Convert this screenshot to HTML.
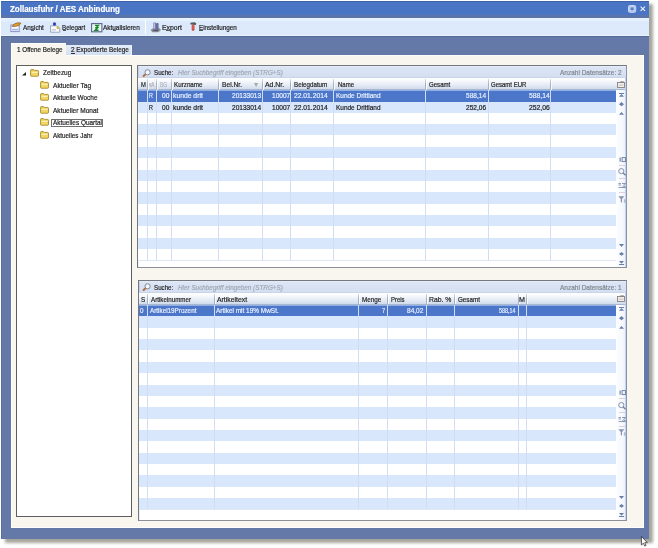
<!DOCTYPE html>
<html><head><meta charset="utf-8"><style>
*{margin:0;padding:0;box-sizing:border-box}
html,body{width:658px;height:548px;overflow:hidden;background:#fff}
body{position:relative;font-family:"Liberation Sans",sans-serif}
.a{position:absolute}
.t{position:absolute;white-space:nowrap;line-height:1;transform-origin:0 0;-webkit-text-stroke:0.2px currentColor}
svg{position:absolute;overflow:visible}
</style></head><body>
<div id="wrap" style="position:absolute;left:0;top:0;width:658px;height:548px;filter:blur(0.35px)">
<div class="a" style="left:5px;top:4px;width:648.3px;height:538.6px;background:rgba(95,92,75,.55);filter:blur(1.5px)"></div>
<div class="a" style="left:1px;top:1px;width:648.30px;height:538.10px;background:#6479a8;border-left:1px solid #5a6e9c"></div>
<div class="a" style="left:1px;top:1px;width:648.30px;height:1.00px;background:#3f63a8"></div>
<div class="a" style="left:1px;top:2px;width:648.30px;height:13.40px;background:#4a74c4"></div>
<div class="a" style="left:1px;top:15.4px;width:648.30px;height:2.20px;background:#5b74aa"></div>
<div class="a" style="left:1px;top:17.6px;width:648.30px;height:17.40px;background:linear-gradient(#e8f5fe 0,#e3f0fd 2.5px,#dce9fb 4px,#ddeafb 100%)"></div>
<div class="a" style="left:1px;top:35.0px;width:648.30px;height:1.00px;background:#eaf4fe"></div>
<div class="a" style="left:1px;top:36.0px;width:648.30px;height:1.00px;background:#586c9b"></div>
<div class="t" style="left:10.00px;top:5.00px;font-size:8.6px;font-weight:bold;color:#ffffff;transform:scaleX(0.926);">Zollausfuhr / AES Anbindung</div>
<svg style="left:627.8px;top:4.9px" width="8.2" height="7.8" viewBox="0 0 8.2 7.8"><rect x="0.5" y="0.5" width="7.2" height="6.8" rx="1.3" fill="#9fb8e6" stroke="#c9d8f4" stroke-width="1"/><rect x="2.0" y="1.9" width="4.2" height="4.0" fill="#5d82c9" stroke="#e3ecfb" stroke-width="0.8"/></svg>
<svg style="left:639.8px;top:6px" width="5.6" height="5.4" viewBox="0 0 5.6 5.4"><path d="M0.6 0.6 L5 4.8 M5 0.6 L0.6 4.8" stroke="#f4f8ff" stroke-width="1.05"/></svg>
<div class="t" style="left:22.80px;top:24.00px;font-size:7.7px;color:#1a1a1a;transform:scaleX(0.828);">Ansicht</div>
<div class="t" style="left:62.30px;top:24.00px;font-size:7.7px;color:#1a1a1a;transform:scaleX(0.809);">Belegart</div>
<div class="t" style="left:103.30px;top:24.00px;font-size:7.7px;color:#1a1a1a;transform:scaleX(0.835);">Aktualisieren</div>
<div class="t" style="left:162.10px;top:24.00px;font-size:7.7px;color:#1a1a1a;transform:scaleX(0.894);">Export</div>
<div class="t" style="left:199.20px;top:24.00px;font-size:7.7px;color:#1a1a1a;transform:scaleX(0.818);">Einstellungen</div>
<div class="a" style="left:30.6px;top:30.3px;width:3.00px;height:0.60px;background:#555"></div>
<div class="a" style="left:62.5px;top:30.3px;width:3.30px;height:0.60px;background:#555"></div>
<div class="a" style="left:112.6px;top:30.3px;width:3.80px;height:0.60px;background:#555"></div>
<div class="a" style="left:166.3px;top:30.3px;width:3.50px;height:0.60px;background:#555"></div>
<div class="a" style="left:199.4px;top:30.3px;width:3.20px;height:0.60px;background:#555"></div>
<div class="a" style="left:145px;top:19.5px;width:1.00px;height:14.10px;background:#97a3b8;border-right:1px solid #fff"></div>
<svg style="left:9.6px;top:22.2px" width="12" height="10.2" viewBox="0 0 12 10.2"><rect x="0.9" y="3" width="8.3" height="6.6" fill="#fbfcff" stroke="#8c8fc6" stroke-width="1"/><rect x="2.2" y="6.8" width="5.8" height="1.6" fill="#9fb4e0"/><path d="M2.2 4.4 C4 1.4 7.6 0.2 10.9 1.2 C9.6 3.6 6.2 4.8 2.2 4.4 Z" fill="#e8a21e" stroke="#7a5420" stroke-width="0.7"/></svg>
<svg style="left:49.7px;top:21.5px" width="10.6" height="10.8" viewBox="0 0 10.6 10.8"><path d="M0.6 3.8 H6.8 L9.8 6.4 V10.2 H0.6 Z" fill="#fdfdff" stroke="#8e9ab2" stroke-width="0.9"/><rect x="2" y="7.2" width="4" height="1.3" fill="#b9c4d8"/><ellipse cx="4.5" cy="2.0" rx="1.6" ry="1.8" fill="#2f3fb8"/><circle cx="7.8" cy="5.8" r="1.3" fill="#c8c030"/></svg>
<svg style="left:90.8px;top:22.8px" width="11.5" height="9.4" viewBox="0 0 11.5 9.4"><rect x="0.6" y="0.6" width="10.3" height="8.2" fill="#eef6f4" stroke="#59658a" stroke-width="1.1"/><path d="M3.9 2.4 H7.4 L5.2 4.5 M4.2 4.8 L6.6 4.8 L4.1 7.2 H7.6" fill="none" stroke="#168a28" stroke-width="1.4"/></svg>
<svg style="left:149.8px;top:21.5px" width="11.5" height="11" viewBox="0 0 11.5 11"><path d="M0.6 7.8 L3 6.2 H9.6 L11 8 L8.4 10.3 H2.2 Z" fill="#8b8f99"/><path d="M2.6 8.8 L4 7.6 H8.6 L7.6 9.2 Z" fill="#4f535e"/><rect x="3.4" y="0.5" width="2.6" height="7" rx="0.8" fill="#7b7fb4"/><rect x="6" y="1" width="2.6" height="6.5" rx="0.8" fill="#696d9c"/><rect x="4" y="1.2" width="0.9" height="5.4" fill="#c4c6e6"/></svg>
<svg style="left:189.6px;top:22.4px" width="6.6" height="9" viewBox="0 0 6.6 9"><path d="M0.3 0.8 L4.6 0.2 L6.3 1.6 L5.8 3 L0.6 2.6 Z" fill="#4e5a58"/><rect x="1.7" y="2.4" width="2.8" height="6.4" rx="1.3" fill="#c8402e"/><rect x="2.6" y="3" width="0.9" height="4.4" fill="#e08070"/></svg>
<div class="a" style="left:10.5px;top:55px;width:633.50px;height:473.00px;background:#f8f6ef;border-left:1.5px solid #fff;border-right:1.5px solid #fff;border-bottom:1.5px solid #fff;border-top:1px solid #fdfdfb"></div>
<div class="a" style="left:10.5px;top:43px;width:55.30px;height:13.20px;background:#f8f6ef;border-left:1px solid #fff;border-top:1px solid #fff"></div>
<div class="a" style="left:65.8px;top:44.6px;width:66.60px;height:10.40px;background:linear-gradient(#e3ecf9,#d3dff2);border-right:1.2px solid #eef3fb"></div>
<div class="t" style="left:16.60px;top:46.00px;font-size:7.7px;color:#1a1a1a;transform:scaleX(0.820);">1 Offene Belege</div>
<div class="t" style="left:71.00px;top:46.00px;font-size:7.7px;color:#1a1a1a;transform:scaleX(0.831);">2 Exportierte Belege</div>
<div class="a" style="left:71.2px;top:53.2px;width:3.40px;height:0.60px;background:#333"></div>
<div class="a" style="left:16px;top:65px;width:116.00px;height:452.00px;background:#fff;border:1px solid #5e5e5e"></div>
<svg style="left:22.2px;top:72px" width="4" height="3.4" viewBox="0 0 4 3.4"><polygon points="4,0 4,3.4 0,3.4" fill="#222"/></svg>
<svg style="left:29.6px;top:68.7px" width="9.2" height="7.8" viewBox="0 0 9.2 7.8"><path d="M0.6 1.3 Q0.6 0.5 1.4 0.5 H3.4 L4.4 1.4 H7.6 Q8.5 1.4 8.5 2.3 V6.6 Q8.5 7.2 7.9 7.2 H1.2 Q0.6 7.2 0.6 6.6 Z" fill="#eccb4a" stroke="#a38a34" stroke-width="0.9"/><path d="M1.4 2.6 H7.7 V4.0 H1.4 Z" fill="#fbf0b4"/><path d="M1.4 4.2 H7.7 V6.4 H1.4 Z" fill="#f2d768"/></svg>
<svg style="left:40.1px;top:80.9px" width="9.2" height="7.8" viewBox="0 0 9.2 7.8"><path d="M0.6 1.3 Q0.6 0.5 1.4 0.5 H3.4 L4.4 1.4 H7.6 Q8.5 1.4 8.5 2.3 V6.6 Q8.5 7.2 7.9 7.2 H1.2 Q0.6 7.2 0.6 6.6 Z" fill="#eccb4a" stroke="#a38a34" stroke-width="0.9"/><path d="M1.4 2.6 H7.7 V4.0 H1.4 Z" fill="#fbf0b4"/><path d="M1.4 4.2 H7.7 V6.4 H1.4 Z" fill="#f2d768"/></svg>
<svg style="left:40.1px;top:93.4px" width="9.2" height="7.8" viewBox="0 0 9.2 7.8"><path d="M0.6 1.3 Q0.6 0.5 1.4 0.5 H3.4 L4.4 1.4 H7.6 Q8.5 1.4 8.5 2.3 V6.6 Q8.5 7.2 7.9 7.2 H1.2 Q0.6 7.2 0.6 6.6 Z" fill="#eccb4a" stroke="#a38a34" stroke-width="0.9"/><path d="M1.4 2.6 H7.7 V4.0 H1.4 Z" fill="#fbf0b4"/><path d="M1.4 4.2 H7.7 V6.4 H1.4 Z" fill="#f2d768"/></svg>
<svg style="left:40.1px;top:105.9px" width="9.2" height="7.8" viewBox="0 0 9.2 7.8"><path d="M0.6 1.3 Q0.6 0.5 1.4 0.5 H3.4 L4.4 1.4 H7.6 Q8.5 1.4 8.5 2.3 V6.6 Q8.5 7.2 7.9 7.2 H1.2 Q0.6 7.2 0.6 6.6 Z" fill="#eccb4a" stroke="#a38a34" stroke-width="0.9"/><path d="M1.4 2.6 H7.7 V4.0 H1.4 Z" fill="#fbf0b4"/><path d="M1.4 4.2 H7.7 V6.4 H1.4 Z" fill="#f2d768"/></svg>
<svg style="left:40.1px;top:118.4px" width="9.2" height="7.8" viewBox="0 0 9.2 7.8"><path d="M0.6 1.3 Q0.6 0.5 1.4 0.5 H3.4 L4.4 1.4 H7.6 Q8.5 1.4 8.5 2.3 V6.6 Q8.5 7.2 7.9 7.2 H1.2 Q0.6 7.2 0.6 6.6 Z" fill="#eccb4a" stroke="#a38a34" stroke-width="0.9"/><path d="M1.4 2.6 H7.7 V4.0 H1.4 Z" fill="#fbf0b4"/><path d="M1.4 4.2 H7.7 V6.4 H1.4 Z" fill="#f2d768"/></svg>
<svg style="left:40.1px;top:130.9px" width="9.2" height="7.8" viewBox="0 0 9.2 7.8"><path d="M0.6 1.3 Q0.6 0.5 1.4 0.5 H3.4 L4.4 1.4 H7.6 Q8.5 1.4 8.5 2.3 V6.6 Q8.5 7.2 7.9 7.2 H1.2 Q0.6 7.2 0.6 6.6 Z" fill="#eccb4a" stroke="#a38a34" stroke-width="0.9"/><path d="M1.4 2.6 H7.7 V4.0 H1.4 Z" fill="#fbf0b4"/><path d="M1.4 4.2 H7.7 V6.4 H1.4 Z" fill="#f2d768"/></svg>
<div class="a" style="left:51.1px;top:119.0px;width:52.20px;height:8.30px;border:1px solid #707070"></div>
<div class="t" style="left:42.60px;top:69.00px;font-size:7.6px;color:#1a1a1a;transform:scaleX(0.848);">Zeitbezug</div>
<div class="t" style="left:52.70px;top:82.00px;font-size:7.6px;color:#1a1a1a;transform:scaleX(0.870);">Aktueller Tag</div>
<div class="t" style="left:52.70px;top:94.00px;font-size:7.6px;color:#1a1a1a;transform:scaleX(0.845);">Aktuelle Woche</div>
<div class="t" style="left:52.70px;top:107.00px;font-size:7.6px;color:#1a1a1a;transform:scaleX(0.861);">Aktueller Monat</div>
<div class="t" style="left:52.70px;top:119.00px;font-size:7.6px;color:#1a1a1a;transform:scaleX(0.847);">Aktuelles Quartal</div>
<div class="t" style="left:52.70px;top:132.00px;font-size:7.6px;color:#1a1a1a;transform:scaleX(0.828);">Aktuelles Jahr</div>
<div class="a" style="left:137.3px;top:65.2px;width:489.60px;height:202.80px;background:#fff;border:1px solid #73777e;border-right-color:#8795b0;border-bottom-color:#8a8f99"></div>
<div class="a" style="left:138.3px;top:66.2px;width:487.60px;height:11.20px;background:linear-gradient(#dce5f5,#d4dff2);border-left:1px solid #c3d1e8;border-top:1px solid #e6ecf7"></div>
<div class="a" style="left:138.3px;top:76.9px;width:487.60px;height:1.00px;background:#c9d4e8"></div>
<svg style="left:140.9px;top:68.5px" width="10" height="9" viewBox="0 0 10 9"><line x1="4.3" y1="5.5" x2="2.6" y2="7.0" stroke="#b8713a" stroke-width="2.1" stroke-linecap="round"/><circle cx="6.6" cy="3.3" r="2.6" fill="#f4f8fc" stroke="#7f8898" stroke-width="1"/></svg>
<div class="t" style="left:154.20px;top:69.00px;font-size:7.7px;color:#1e1e1e;transform:scaleX(0.805);">Suche:</div>
<div class="t" style="left:178.00px;top:69.00px;font-size:7.7px;font-style:italic;color:#a0a7b2;transform:scaleX(0.825);">Hier Suchbegriff eingeben (STRG+S)</div>
<div class="t" style="left:559.90px;top:69.00px;font-size:7.7px;color:#80868f;transform:scaleX(0.844);">Anzahl Datensätze: 2</div>
<div class="a" style="left:138.3px;top:77.9px;width:487.60px;height:12.30px;background:linear-gradient(#ffffff 0%,#f5f8fc 30%,#e2e9f4 70%,#d0dbed 100%);border-bottom:1px solid #a9b8d0"></div>
<div class="a" style="left:616.0px;top:90.2px;width:9.90px;height:176.80px;background:linear-gradient(90deg,#fdfeff,#f4f7fc 70%,#e9eff8)"></div>
<div class="a" style="left:624.8px;top:77.9px;width:1.10px;height:189.10px;background:#c6d3ea"></div>
<div class="a" style="left:138.3px;top:90.2px;width:1.00px;height:176.80px;background:rgba(232,238,248,.9)"></div>
<div class="a" style="left:138.3px;top:90.2px;width:477.70px;height:170.40px;background:repeating-linear-gradient(#fff 0,#fff 11.36px,#d9e7fc 11.36px,#d9e7fc 22.72px)"></div>
<div class="a" style="left:138.3px;top:260.4px;width:477.70px;height:1.00px;background:#dfe7f4"></div>
<div class="a" style="left:138.3px;top:90.2px;width:477.70px;height:11.36px;background:#4b76c9"></div>
<div class="a" style="left:138.3px;top:90.2px;width:477.70px;height:0.90px;background:#8fb0e6"></div>
<div class="a" style="left:146.7px;top:90.2px;width:1.00px;height:170.40px;background:#d0ddf2"></div>
<div class="a" style="left:146.7px;top:79.10000000000001px;width:1.00px;height:10.50px;background:linear-gradient(#d4d9e2,#a2adbf 50%,#a8b3c5)"></div>
<div class="a" style="left:147.7px;top:79.10000000000001px;width:0.60px;height:10.50px;background:rgba(255,255,255,.8)"></div>
<div class="a" style="left:156.4px;top:90.2px;width:1.00px;height:170.40px;background:#d0ddf2"></div>
<div class="a" style="left:156.4px;top:79.10000000000001px;width:1.00px;height:10.50px;background:linear-gradient(#d4d9e2,#a2adbf 50%,#a8b3c5)"></div>
<div class="a" style="left:157.4px;top:79.10000000000001px;width:0.60px;height:10.50px;background:rgba(255,255,255,.8)"></div>
<div class="a" style="left:170.5px;top:90.2px;width:1.00px;height:170.40px;background:#d0ddf2"></div>
<div class="a" style="left:170.5px;top:79.10000000000001px;width:1.00px;height:10.50px;background:linear-gradient(#d4d9e2,#a2adbf 50%,#a8b3c5)"></div>
<div class="a" style="left:171.5px;top:79.10000000000001px;width:0.60px;height:10.50px;background:rgba(255,255,255,.8)"></div>
<div class="a" style="left:218.4px;top:90.2px;width:1.00px;height:170.40px;background:#d0ddf2"></div>
<div class="a" style="left:218.4px;top:79.10000000000001px;width:1.00px;height:10.50px;background:linear-gradient(#d4d9e2,#a2adbf 50%,#a8b3c5)"></div>
<div class="a" style="left:219.4px;top:79.10000000000001px;width:0.60px;height:10.50px;background:rgba(255,255,255,.8)"></div>
<div class="a" style="left:262.3px;top:90.2px;width:1.00px;height:170.40px;background:#d0ddf2"></div>
<div class="a" style="left:262.3px;top:79.10000000000001px;width:1.00px;height:10.50px;background:linear-gradient(#d4d9e2,#a2adbf 50%,#a8b3c5)"></div>
<div class="a" style="left:263.3px;top:79.10000000000001px;width:0.60px;height:10.50px;background:rgba(255,255,255,.8)"></div>
<div class="a" style="left:290.4px;top:90.2px;width:1.00px;height:170.40px;background:#d0ddf2"></div>
<div class="a" style="left:290.4px;top:79.10000000000001px;width:1.00px;height:10.50px;background:linear-gradient(#d4d9e2,#a2adbf 50%,#a8b3c5)"></div>
<div class="a" style="left:291.4px;top:79.10000000000001px;width:0.60px;height:10.50px;background:rgba(255,255,255,.8)"></div>
<div class="a" style="left:333.3px;top:90.2px;width:1.00px;height:170.40px;background:#d0ddf2"></div>
<div class="a" style="left:333.3px;top:79.10000000000001px;width:1.00px;height:10.50px;background:linear-gradient(#d4d9e2,#a2adbf 50%,#a8b3c5)"></div>
<div class="a" style="left:334.3px;top:79.10000000000001px;width:0.60px;height:10.50px;background:rgba(255,255,255,.8)"></div>
<div class="a" style="left:425.3px;top:90.2px;width:1.00px;height:170.40px;background:#d0ddf2"></div>
<div class="a" style="left:425.3px;top:79.10000000000001px;width:1.00px;height:10.50px;background:linear-gradient(#d4d9e2,#a2adbf 50%,#a8b3c5)"></div>
<div class="a" style="left:426.3px;top:79.10000000000001px;width:0.60px;height:10.50px;background:rgba(255,255,255,.8)"></div>
<div class="a" style="left:488.2px;top:90.2px;width:1.00px;height:170.40px;background:#d0ddf2"></div>
<div class="a" style="left:488.2px;top:79.10000000000001px;width:1.00px;height:10.50px;background:linear-gradient(#d4d9e2,#a2adbf 50%,#a8b3c5)"></div>
<div class="a" style="left:489.2px;top:79.10000000000001px;width:0.60px;height:10.50px;background:rgba(255,255,255,.8)"></div>
<div class="a" style="left:550.2px;top:90.2px;width:1.00px;height:170.40px;background:#d0ddf2"></div>
<div class="a" style="left:550.2px;top:79.10000000000001px;width:1.00px;height:10.50px;background:linear-gradient(#d4d9e2,#a2adbf 50%,#a8b3c5)"></div>
<div class="a" style="left:551.2px;top:79.10000000000001px;width:0.60px;height:10.50px;background:rgba(255,255,255,.8)"></div>
<svg style="left:617.3px;top:80.5px" width="8" height="7" viewBox="0 0 8 7"><rect x="0.5" y="1.5" width="7" height="5" fill="#f2f0ee" stroke="#8a817c" stroke-width="0.9"/><rect x="3.2" y="0.4" width="3.6" height="1.6" fill="#8a817c"/><rect x="1.6" y="3.3" width="4.8" height="1.8" fill="#d8d2cc"/></svg>
<div class="t" style="left:140.80px;top:81.00px;font-size:7.7px;color:#222;transform:scaleX(0.762);">M</div>
<div class="t" style="left:148.80px;top:81.00px;font-size:7.7px;color:#b0a8b0;transform:scaleX(0.599);">vA</div>
<div class="t" style="left:159.80px;top:81.00px;font-size:7.7px;color:#b0b6c0;transform:scaleX(0.647);">BG</div>
<div class="t" style="left:173.70px;top:81.00px;font-size:7.7px;color:#222;transform:scaleX(0.815);">Kurzname</div>
<div class="t" style="left:222.40px;top:81.00px;font-size:7.7px;color:#222;transform:scaleX(0.866);">Bel.Nr.</div>
<div class="t" style="left:265.20px;top:81.00px;font-size:7.7px;color:#222;transform:scaleX(0.897);">Ad.Nr.</div>
<div class="t" style="left:294.00px;top:81.00px;font-size:7.7px;color:#222;transform:scaleX(0.811);">Belegdatum</div>
<div class="t" style="left:337.70px;top:81.00px;font-size:7.7px;color:#222;transform:scaleX(0.778);">Name</div>
<div class="t" style="left:429.00px;top:81.00px;font-size:7.7px;color:#222;transform:scaleX(0.790);">Gesamt</div>
<div class="t" style="left:490.90px;top:81.00px;font-size:7.7px;color:#222;transform:scaleX(0.781);">Gesamt EUR</div>
<div class="t" style="left:149.10px;top:92.00px;font-size:7.7px;color:#eaf1ff;transform:scaleX(0.703);">R</div>
<div class="t" style="left:161.50px;top:92.00px;font-size:7.7px;color:#eaf1ff;transform:scaleX(0.854);">00</div>
<div class="t" style="left:172.50px;top:92.00px;font-size:7.7px;color:#eaf1ff;transform:scaleX(0.882);">kunde drit</div>
<div class="t" style="left:231.50px;top:92.00px;font-size:7.7px;color:#eaf1ff;transform:scaleX(0.852);">20133013</div>
<div class="t" style="left:271.60px;top:92.00px;font-size:7.7px;color:#eaf1ff;transform:scaleX(0.855);">10007</div>
<div class="t" style="left:293.50px;top:92.00px;font-size:7.7px;color:#eaf1ff;transform:scaleX(0.877);">22.01.2014</div>
<div class="t" style="left:336.40px;top:92.00px;font-size:7.7px;color:#eaf1ff;transform:scaleX(0.840);">Kunde Drittland</div>
<div class="t" style="left:466.30px;top:92.00px;font-size:7.7px;color:#eaf1ff;transform:scaleX(0.853);">588,14</div>
<div class="t" style="left:528.50px;top:92.00px;font-size:7.7px;color:#eaf1ff;transform:scaleX(0.883);">588,14</div>
<div class="t" style="left:149.10px;top:104.00px;font-size:7.7px;color:#1a1a1a;transform:scaleX(0.703);">R</div>
<div class="t" style="left:161.50px;top:104.00px;font-size:7.7px;color:#1a1a1a;transform:scaleX(0.854);">00</div>
<div class="t" style="left:172.50px;top:104.00px;font-size:7.7px;color:#1a1a1a;transform:scaleX(0.882);">kunde drit</div>
<div class="t" style="left:231.50px;top:104.00px;font-size:7.7px;color:#1a1a1a;transform:scaleX(0.852);">20133014</div>
<div class="t" style="left:271.60px;top:104.00px;font-size:7.7px;color:#1a1a1a;transform:scaleX(0.855);">10007</div>
<div class="t" style="left:293.50px;top:104.00px;font-size:7.7px;color:#1a1a1a;transform:scaleX(0.877);">22.01.2014</div>
<div class="t" style="left:336.40px;top:104.00px;font-size:7.7px;color:#1a1a1a;transform:scaleX(0.840);">Kunde Drittland</div>
<div class="t" style="left:466.30px;top:104.00px;font-size:7.7px;color:#1a1a1a;transform:scaleX(0.853);">252,06</div>
<div class="t" style="left:528.50px;top:104.00px;font-size:7.7px;color:#1a1a1a;transform:scaleX(0.883);">252,06</div>
<div class="a" style="left:619.3px;top:92.5px;width:5.00px;height:0.90px;background:#6a7ea8"></div>
<svg style="left:619.3px;top:94.2px" width="5" height="2.7" viewBox="0 0 5 2.7"><polygon points="0,2.7 2.5,0 5,2.7" fill="#6a7ea8"/></svg>
<svg style="left:619.3px;top:101.89999999999999px" width="5" height="4.3" viewBox="0 0 5 4.3"><polygon points="0,2.15 2.5,0 5,2.15 2.5,4.3" fill="#6a7ea8"/></svg>
<svg style="left:619.3px;top:111.9px" width="5" height="2.8" viewBox="0 0 5 2.8"><polygon points="0,2.8 2.5,0 5,2.8" fill="#6a7ea8"/></svg>
<svg style="left:618.8px;top:156.9px" width="7" height="5.2" viewBox="0 0 7 5.2"><rect x="0.6" y="0.5" width="1" height="4.2" fill="#5c6d94"/><rect x="3.1" y="0.6" width="3.3" height="4.0" fill="none" stroke="#6a7aa0" stroke-width="0.9"/></svg>
<div class="a" style="left:618.8px;top:164.9px;width:6.50px;height:0.60px;background:#ddd0dc"></div>
<svg style="left:618.0px;top:168.1px" width="9" height="8" viewBox="0 0 9 8"><circle cx="3.3" cy="3.1" r="2.6" fill="#f4f7fb" stroke="#7a86a0" stroke-width="0.9"/><line x1="5.2" y1="5" x2="7.6" y2="7.3" stroke="#6f7fa5" stroke-width="1.3"/></svg>
<div class="a" style="left:618.8px;top:178.4px;width:6.50px;height:0.60px;background:#ddd0dc"></div>
<svg style="left:618.3px;top:183.4px" width="8" height="5" viewBox="0 0 8 5"><path d="M0.5 0.5 H3 M0.5 2 H3 M4 0.5 H7.5 L5.5 2.2 L7.5 4 H4 M0.5 4.5 H7.5" fill="none" stroke="#7584a6" stroke-width="0.8"/></svg>
<div class="a" style="left:618.8px;top:192.10000000000002px;width:6.50px;height:0.60px;background:#ddd0dc"></div>
<svg style="left:618.0px;top:195.7px" width="9" height="7" viewBox="0 0 9 7"><path d="M0.3 0.3 H6.3 L4 3 V6.8 L2.8 6 V3 Z" fill="#8593b3"/><path d="M6.4 3.2 V6.8 M7.8 3.6 V6.8" stroke="#9fb0cc" stroke-width="0.9"/></svg>
<svg style="left:619.3px;top:243.7px" width="5" height="3" viewBox="0 0 5 3"><polygon points="0,0 2.5,3 5,0" fill="#6a7ea8"/></svg>
<svg style="left:619.3px;top:252.29999999999998px" width="5" height="3.8" viewBox="0 0 5 3.8"><polygon points="0,1.9 2.5,0 5,1.9 2.5,3.8" fill="#6a7ea8"/></svg>
<svg style="left:619.3px;top:260.9px" width="5" height="2.8" viewBox="0 0 5 2.8"><polygon points="0,0 2.5,2.8 5,0" fill="#6a7ea8"/></svg>
<div class="a" style="left:619.3px;top:264.3px;width:5.00px;height:0.90px;background:#6a7ea8"></div>
<svg style="position:absolute;left:254.1px;top:82.9px" width="4.2" height="4" viewBox="0 0 4.2 4"><polygon points="0,0 4.2,0 2.1,4" fill="#9fae9f"/></svg>
<div class="a" style="left:137.5px;top:280.0px;width:489.30px;height:240.60px;background:#fff;border:1px solid #73777e;border-right-color:#8795b0;border-bottom-color:#8a8f99"></div>
<div class="a" style="left:138.5px;top:281.0px;width:487.30px;height:11.20px;background:linear-gradient(#dce5f5,#d4dff2);border-left:1px solid #c3d1e8;border-top:1px solid #e6ecf7"></div>
<div class="a" style="left:138.5px;top:291.7px;width:487.30px;height:1.00px;background:#c9d4e8"></div>
<svg style="left:141.1px;top:283.3px" width="10" height="9" viewBox="0 0 10 9"><line x1="4.3" y1="5.5" x2="2.6" y2="7.0" stroke="#b8713a" stroke-width="2.1" stroke-linecap="round"/><circle cx="6.6" cy="3.3" r="2.6" fill="#f4f8fc" stroke="#7f8898" stroke-width="1"/></svg>
<div class="t" style="left:154.20px;top:284.00px;font-size:7.7px;color:#1e1e1e;transform:scaleX(0.805);">Suche:</div>
<div class="t" style="left:178.00px;top:284.00px;font-size:7.7px;font-style:italic;color:#a0a7b2;transform:scaleX(0.825);">Hier Suchbegriff eingeben (STRG+S)</div>
<div class="t" style="left:559.90px;top:284.00px;font-size:7.7px;color:#80868f;transform:scaleX(0.844);">Anzahl Datensätze: 1</div>
<div class="a" style="left:138.5px;top:292.7px;width:487.30px;height:12.30px;background:linear-gradient(#ffffff 0%,#f5f8fc 30%,#e2e9f4 70%,#d0dbed 100%);border-bottom:1px solid #a9b8d0"></div>
<div class="a" style="left:616.0px;top:305.0px;width:9.80px;height:214.60px;background:linear-gradient(90deg,#fdfeff,#f4f7fc 70%,#e9eff8)"></div>
<div class="a" style="left:624.6999999999999px;top:292.7px;width:1.10px;height:226.90px;background:#c6d3ea"></div>
<div class="a" style="left:138.5px;top:305.0px;width:1.00px;height:214.60px;background:rgba(232,238,248,.9)"></div>
<div class="a" style="left:138.5px;top:305.0px;width:477.50px;height:204.48px;background:repeating-linear-gradient(#fff 0,#fff 11.36px,#d9e7fc 11.36px,#d9e7fc 22.72px)"></div>
<div class="a" style="left:138.5px;top:509.28000000000003px;width:477.50px;height:1.00px;background:#dfe7f4"></div>
<div class="a" style="left:138.5px;top:305.0px;width:477.50px;height:11.36px;background:#4b76c9"></div>
<div class="a" style="left:138.5px;top:305.0px;width:477.50px;height:0.90px;background:#8fb0e6"></div>
<div class="a" style="left:146.8px;top:305.0px;width:1.00px;height:204.48px;background:#d0ddf2"></div>
<div class="a" style="left:146.8px;top:293.9px;width:1.00px;height:10.50px;background:linear-gradient(#d4d9e2,#a2adbf 50%,#a8b3c5)"></div>
<div class="a" style="left:147.8px;top:293.9px;width:0.60px;height:10.50px;background:rgba(255,255,255,.8)"></div>
<div class="a" style="left:214.1px;top:305.0px;width:1.00px;height:204.48px;background:#d0ddf2"></div>
<div class="a" style="left:214.1px;top:293.9px;width:1.00px;height:10.50px;background:linear-gradient(#d4d9e2,#a2adbf 50%,#a8b3c5)"></div>
<div class="a" style="left:215.1px;top:293.9px;width:0.60px;height:10.50px;background:rgba(255,255,255,.8)"></div>
<div class="a" style="left:358.3px;top:305.0px;width:1.00px;height:204.48px;background:#d0ddf2"></div>
<div class="a" style="left:358.3px;top:293.9px;width:1.00px;height:10.50px;background:linear-gradient(#d4d9e2,#a2adbf 50%,#a8b3c5)"></div>
<div class="a" style="left:359.3px;top:293.9px;width:0.60px;height:10.50px;background:rgba(255,255,255,.8)"></div>
<div class="a" style="left:387.1px;top:305.0px;width:1.00px;height:204.48px;background:#d0ddf2"></div>
<div class="a" style="left:387.1px;top:293.9px;width:1.00px;height:10.50px;background:linear-gradient(#d4d9e2,#a2adbf 50%,#a8b3c5)"></div>
<div class="a" style="left:388.1px;top:293.9px;width:0.60px;height:10.50px;background:rgba(255,255,255,.8)"></div>
<div class="a" style="left:425.5px;top:305.0px;width:1.00px;height:204.48px;background:#d0ddf2"></div>
<div class="a" style="left:425.5px;top:293.9px;width:1.00px;height:10.50px;background:linear-gradient(#d4d9e2,#a2adbf 50%,#a8b3c5)"></div>
<div class="a" style="left:426.5px;top:293.9px;width:0.60px;height:10.50px;background:rgba(255,255,255,.8)"></div>
<div class="a" style="left:453.7px;top:305.0px;width:1.00px;height:204.48px;background:#d0ddf2"></div>
<div class="a" style="left:453.7px;top:293.9px;width:1.00px;height:10.50px;background:linear-gradient(#d4d9e2,#a2adbf 50%,#a8b3c5)"></div>
<div class="a" style="left:454.7px;top:293.9px;width:0.60px;height:10.50px;background:rgba(255,255,255,.8)"></div>
<div class="a" style="left:517.7px;top:305.0px;width:1.00px;height:204.48px;background:#d0ddf2"></div>
<div class="a" style="left:517.7px;top:293.9px;width:1.00px;height:10.50px;background:linear-gradient(#d4d9e2,#a2adbf 50%,#a8b3c5)"></div>
<div class="a" style="left:518.7px;top:293.9px;width:0.60px;height:10.50px;background:rgba(255,255,255,.8)"></div>
<div class="a" style="left:526.3px;top:305.0px;width:1.00px;height:204.48px;background:#d0ddf2"></div>
<div class="a" style="left:526.3px;top:293.9px;width:1.00px;height:10.50px;background:linear-gradient(#d4d9e2,#a2adbf 50%,#a8b3c5)"></div>
<div class="a" style="left:527.3px;top:293.9px;width:0.60px;height:10.50px;background:rgba(255,255,255,.8)"></div>
<svg style="left:617.3px;top:295.3px" width="8" height="7" viewBox="0 0 8 7"><rect x="0.5" y="1.5" width="7" height="5" fill="#f2f0ee" stroke="#8a817c" stroke-width="0.9"/><rect x="3.2" y="0.4" width="3.6" height="1.6" fill="#8a817c"/><rect x="1.6" y="3.3" width="4.8" height="1.8" fill="#d8d2cc"/></svg>
<div class="t" style="left:140.60px;top:296.00px;font-size:7.7px;color:#222;transform:scaleX(0.820);">S</div>
<div class="t" style="left:150.60px;top:296.00px;font-size:7.7px;color:#222;transform:scaleX(0.808);">Artikelnummer</div>
<div class="t" style="left:217.20px;top:296.00px;font-size:7.7px;color:#222;transform:scaleX(0.890);">Artikeltext</div>
<div class="t" style="left:361.80px;top:296.00px;font-size:7.7px;color:#222;transform:scaleX(0.815);">Menge</div>
<div class="t" style="left:390.60px;top:296.00px;font-size:7.7px;color:#222;transform:scaleX(0.775);">Preis</div>
<div class="t" style="left:428.90px;top:296.00px;font-size:7.7px;color:#222;transform:scaleX(0.887);">Rab. %</div>
<div class="t" style="left:457.60px;top:296.00px;font-size:7.7px;color:#222;transform:scaleX(0.813);">Gesamt</div>
<div class="t" style="left:519.10px;top:296.00px;font-size:7.7px;color:#222;transform:scaleX(0.933);">M</div>
<div class="t" style="left:139.80px;top:307.00px;font-size:7.7px;color:#eaf1ff;transform:scaleX(0.819);">0</div>
<div class="t" style="left:149.70px;top:307.00px;font-size:7.7px;color:#eaf1ff;transform:scaleX(0.823);">Artikel19Prozent</div>
<div class="t" style="left:216.40px;top:307.00px;font-size:7.7px;color:#eaf1ff;transform:scaleX(0.839);">Artikel mit 19% MwSt.</div>
<div class="t" style="left:382.40px;top:307.00px;font-size:7.7px;color:#eaf1ff;transform:scaleX(0.749);">7</div>
<div class="t" style="left:407.00px;top:307.00px;font-size:7.7px;color:#eaf1ff;transform:scaleX(0.850);">84,02</div>
<div class="t" style="left:498.60px;top:307.00px;font-size:7.7px;color:#eaf1ff;transform:scaleX(0.696);">588,14</div>
<div class="a" style="left:619.3px;top:306.59999999999997px;width:5.00px;height:0.90px;background:#6a7ea8"></div>
<svg style="left:619.3px;top:308.29999999999995px" width="5" height="2.7" viewBox="0 0 5 2.7"><polygon points="0,2.7 2.5,0 5,2.7" fill="#6a7ea8"/></svg>
<svg style="left:619.3px;top:316.0px" width="5" height="4.3" viewBox="0 0 5 4.3"><polygon points="0,2.15 2.5,0 5,2.15 2.5,4.3" fill="#6a7ea8"/></svg>
<svg style="left:619.3px;top:326.0px" width="5" height="2.8" viewBox="0 0 5 2.8"><polygon points="0,2.8 2.5,0 5,2.8" fill="#6a7ea8"/></svg>
<svg style="left:618.8px;top:390.4px" width="7" height="5.2" viewBox="0 0 7 5.2"><rect x="0.6" y="0.5" width="1" height="4.2" fill="#5c6d94"/><rect x="3.1" y="0.6" width="3.3" height="4.0" fill="none" stroke="#6a7aa0" stroke-width="0.9"/></svg>
<div class="a" style="left:618.8px;top:398.4px;width:6.50px;height:0.60px;background:#ddd0dc"></div>
<svg style="left:618.0px;top:401.59999999999997px" width="9" height="8" viewBox="0 0 9 8"><circle cx="3.3" cy="3.1" r="2.6" fill="#f4f7fb" stroke="#7a86a0" stroke-width="0.9"/><line x1="5.2" y1="5" x2="7.6" y2="7.3" stroke="#6f7fa5" stroke-width="1.3"/></svg>
<div class="a" style="left:618.8px;top:411.9px;width:6.50px;height:0.60px;background:#ddd0dc"></div>
<svg style="left:618.3px;top:416.9px" width="8" height="5" viewBox="0 0 8 5"><path d="M0.5 0.5 H3 M0.5 2 H3 M4 0.5 H7.5 L5.5 2.2 L7.5 4 H4 M0.5 4.5 H7.5" fill="none" stroke="#7584a6" stroke-width="0.8"/></svg>
<div class="a" style="left:618.8px;top:425.59999999999997px;width:6.50px;height:0.60px;background:#ddd0dc"></div>
<svg style="left:618.0px;top:429.2px" width="9" height="7" viewBox="0 0 9 7"><path d="M0.3 0.3 H6.3 L4 3 V6.8 L2.8 6 V3 Z" fill="#8593b3"/><path d="M6.4 3.2 V6.8 M7.8 3.6 V6.8" stroke="#9fb0cc" stroke-width="0.9"/></svg>
<svg style="left:619.3px;top:495.8px" width="5" height="3" viewBox="0 0 5 3"><polygon points="0,0 2.5,3 5,0" fill="#6a7ea8"/></svg>
<svg style="left:619.3px;top:504.40000000000003px" width="5" height="3.8" viewBox="0 0 5 3.8"><polygon points="0,1.9 2.5,0 5,1.9 2.5,3.8" fill="#6a7ea8"/></svg>
<svg style="left:619.3px;top:513.0px" width="5" height="2.8" viewBox="0 0 5 2.8"><polygon points="0,0 2.5,2.8 5,0" fill="#6a7ea8"/></svg>
<div class="a" style="left:619.3px;top:516.4px;width:5.00px;height:0.90px;background:#6a7ea8"></div>
<svg style="left:641px;top:536px" width="7" height="10.5" viewBox="0 0 8 12"><path d="M0.5 0.5 V10.3 L2.7 8.2 L4.3 11.5 L5.8 10.8 L4.3 7.6 H7.3 Z" fill="#fff" stroke="#222" stroke-width="0.8" stroke-linejoin="round"/></svg>
</div>
</body></html>
